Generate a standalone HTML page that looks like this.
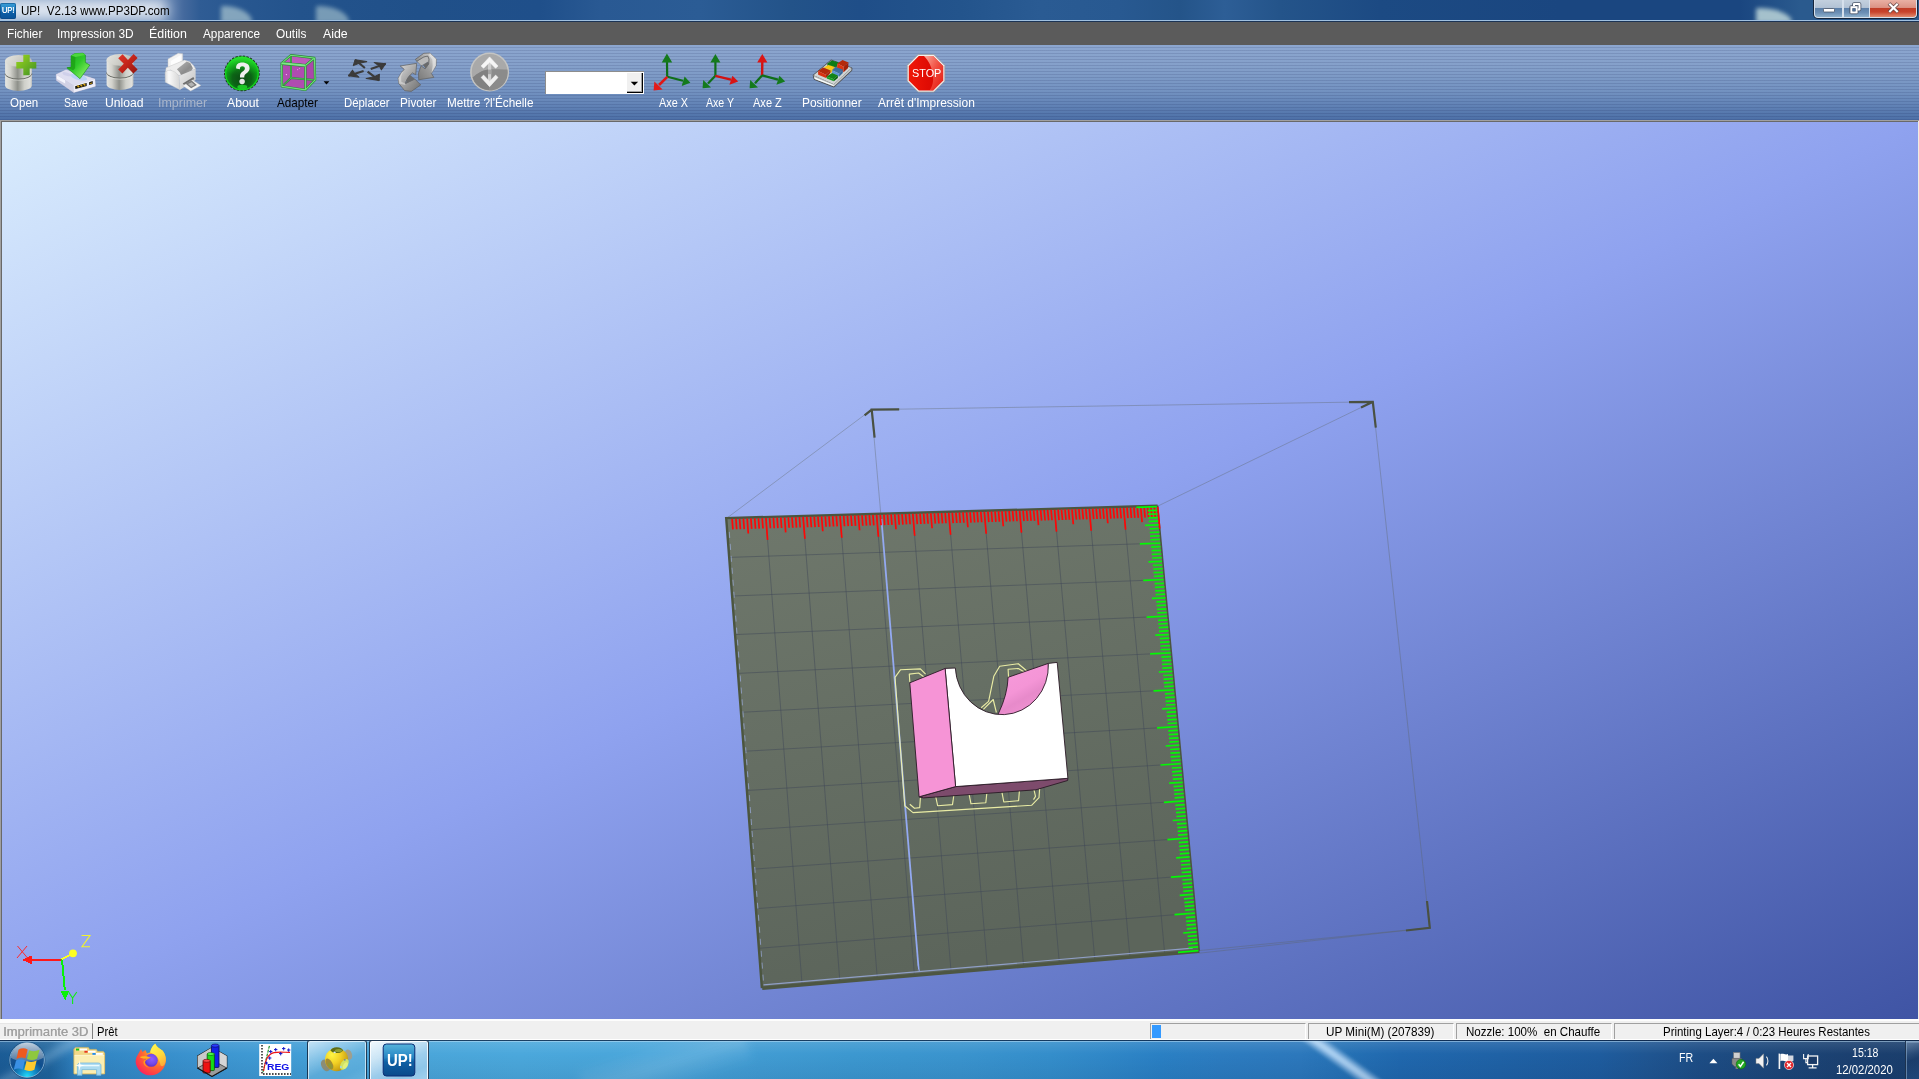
<!DOCTYPE html>
<html><head><meta charset="utf-8"><title>UP!</title>
<style>
html,body{margin:0;padding:0;background:#000;}
body{width:1919px;height:1079px;overflow:hidden;font-family:"Liberation Sans",sans-serif;font-size:12px;}
#root{position:relative;width:1919px;height:1079px;overflow:hidden;background:#f0f0f0;}
.abs{position:absolute;}
.t{position:absolute;white-space:pre;line-height:14px;height:14px;transform-origin:0 0;}
/* title bar */
#title{position:absolute;left:0;top:0;width:1919px;height:22px;overflow:hidden;
 background:linear-gradient(90deg,#86a3c8 0px,#7693bd 160px,#44699d 184px,#2f5c94 200px,#285790 240px,#23538c 300px,#205089 420px,#1f4f8a 540px,#295993 600px,#2b5c95 700px,#235389 790px,#1f4e88 860px,#23548c 960px,#2a5b93 1040px,#285991 1120px,#245489 1180px,#2d5e96 1225px,#24548a 1280px,#1c4a83 1380px,#1a4680 1560px,#1a4680 1740px,#2a5a8e 1800px,#2a598d 1919px);}
#title .glow{position:absolute;left:-10px;top:1px;width:178px;height:17px;border-radius:9px;background:rgba(255,255,255,.86);filter:blur(7px);}
#title .l1{position:absolute;left:0;top:20px;width:1919px;height:1px;background:#9fc0e0;}
#title .l2{position:absolute;left:0;top:21px;width:1919px;height:1px;background:#1b3354;}
/* menubar */
#menu{position:absolute;left:0;top:22px;width:1919px;height:23px;background:#5b5b5b;color:#fff;}
/* toolbar */
#tb{position:absolute;left:0;top:45px;width:1919px;height:75px;
 background:
  repeating-linear-gradient(180deg,rgba(0,0,40,0) 0px,rgba(0,0,40,0) 2px,rgba(0,10,60,.115) 2px,rgba(0,10,60,.115) 3px),
  linear-gradient(180deg,#8ca6cf 0px,#85a0ca 20px,#7493c1 45px,#6283b6 60px,#4d70a7 75px);}
#tb .lb{position:absolute;top:52px;color:#fff;white-space:nowrap;line-height:14px;height:14px;transform-origin:0 0;font-size:12px;}
/* viewport */
#vpb1{position:absolute;left:0;top:120px;width:1919px;height:900px;background:#a0a0a0;}
#vpb2{position:absolute;left:1px;top:121px;width:1917px;height:898px;background:#696969;}
#vp{position:absolute;left:2px;top:122px;width:1916px;height:897px;overflow:hidden;
 background:linear-gradient(to bottom right,#d9ecfd 0%,#8fa2ef 50%,#3f54a4 100%);}
/* status bar */
#sb{position:absolute;left:0;top:1019px;width:1919px;height:21px;background:#f0f0f0;}
/* taskbar */
#task{position:absolute;left:0;top:1040px;width:1919px;height:39px;overflow:hidden;}
.wb{top:0;height:17px;background:linear-gradient(180deg,#c3d0de 0%,#b3c3d5 44%,#5b7fa8 48%,#6c8fb5 75%,#8db0cc 100%);}
.wbc{top:0;height:17px;background:linear-gradient(180deg,#e9b0a3 0%,#dc9384 44%,#c03d26 48%,#c9432c 70%,#e28a6e 100%);}

#title .blob{position:absolute;background:#c6dede;filter:blur(2px);border-radius:2px 100% 0 0;}

</style></head>
<body>
<div id="root">
<div id="title">
<div class="blob" style="left:221px;top:6px;width:31px;height:17px;opacity:.58"></div><div class="blob" style="left:316px;top:6px;width:33px;height:17px;opacity:.52"></div><div class="blob" style="left:1756px;top:8px;width:36px;height:15px;opacity:.8"></div>
<div class="glow"></div>
<div class="abs" style="left:0;top:3px;width:16px;height:16px;border-radius:2px;background:linear-gradient(180deg,#3aa0d8 0%,#1f7cc0 40%,#0d5ea6 60%,#0a5298 100%);box-shadow:inset 0 0 0 1px rgba(10,70,130,.55)"></div>
<span class="t" style="left:2.30px;top:3.4px;font-size:8.6px;color:#fff;font-weight:normal;transform:scaleX(0.8609);text-shadow:0 0 .6px #fff;">UP!</span>
<span class="t" style="left:20.61px;top:4.0px;font-size:13px;color:#000;font-weight:normal;transform:scaleX(0.8918);">UP!  V2.13 www.PP3DP.com</span>
<div class="abs" style="left:1813px;top:-1px;width:105px;height:20px;border-radius:0 0 5px 5px;background:#16263c;"></div>
<div class="abs" style="left:1814px;top:0;width:103px;height:18px;border-radius:0 0 4px 4px;background:rgba(235,245,255,.9);"></div>
<div class="abs wb" style="left:1815px;width:27px;border-radius:0 0 0 3px;"></div>
<div class="abs wb" style="left:1844px;width:25px;"></div>
<div class="abs wbc" style="left:1870px;width:46px;border-radius:0 0 3px 0;"></div>
<svg class="abs" style="left:1812px;top:0" width="107" height="20" viewBox="1812 0 107 20">
 <rect x="1823.5" y="8.5" width="11" height="3.5" rx=".8" fill="#fff" stroke="#4a5568" stroke-width=".8"/>
 <g fill="none" stroke="#4a5568" stroke-width="3.6" stroke-linejoin="round"><rect x="1854" y="4" width="5.5" height="5.5"/><rect x="1851.2" y="7" width="5.5" height="5.5"/></g>
 <g fill="none" stroke="#fff" stroke-width="2" stroke-linejoin="round"><rect x="1854" y="4" width="5.5" height="5.5"/></g>
 <rect x="1850.2" y="6" width="7.5" height="7.5" fill="#4a5568" rx="1"/>
 <g fill="none" stroke="#fff" stroke-width="2" stroke-linejoin="miter"><rect x="1851.4" y="7.2" width="5.2" height="5.2"/></g>
 <rect x="1852.6" y="8.4" width="2.8" height="2.8" fill="#4e6f98"/>
 <g stroke-linecap="butt" fill="none"><path d="M1889,3.5 L1898,12.2 M1898,3.5 L1889,12.2" stroke="#6a4a48" stroke-width="3.8"/><path d="M1889.3,3.8 L1897.7,12 M1897.7,3.8 L1889.3,12" stroke="#fff" stroke-width="2.2"/></g>
</svg>
<div class="l1"></div><div class="l2"></div>
</div>
<div id="menu">
<span class="t" style="left:7.40px;top:4.5px;font-size:13px;color:#fff;font-weight:normal;transform:scaleX(0.9049);">Fichier</span>
<span class="t" style="left:57.49px;top:4.5px;font-size:13px;color:#fff;font-weight:normal;transform:scaleX(0.9148);">Impression 3D</span>
<span class="t" style="left:149.05px;top:4.5px;font-size:13px;color:#fff;font-weight:normal;transform:scaleX(0.9528);">Édition</span>
<span class="t" style="left:203.20px;top:4.5px;font-size:13px;color:#fff;font-weight:normal;transform:scaleX(0.9066);">Apparence</span>
<span class="t" style="left:276.00px;top:4.5px;font-size:13px;color:#fff;font-weight:normal;transform:scaleX(0.9131);">Outils</span>
<span class="t" style="left:322.80px;top:4.5px;font-size:13px;color:#fff;font-weight:normal;transform:scaleX(0.9461);">Aide</span>
</div>
<div id="tb">
<svg class="abs" style="left:0;top:0" width="1000" height="75" viewBox="0 45 1000 75"><defs>
<linearGradient id="cyl" x1="0" x2="1" y1="0" y2="0"><stop offset="0" stop-color="#e6e6e2"/><stop offset=".2" stop-color="#d2d2cc"/><stop offset=".47" stop-color="#8e908a"/><stop offset=".72" stop-color="#cfd0ca"/><stop offset=".93" stop-color="#dfdfdb"/><stop offset="1" stop-color="#c4c4c0"/></linearGradient>
<linearGradient id="cylt" x1="0" x2="1" y1="0" y2="0.3"><stop offset="0" stop-color="#e6e6e2"/><stop offset=".5" stop-color="#d2d2cc"/><stop offset="1" stop-color="#bcbcb6"/></linearGradient>
<linearGradient id="plus" x1="0" x2="1" y1="0" y2="1"><stop offset="0" stop-color="#9ad51c"/><stop offset=".5" stop-color="#6fb422"/><stop offset="1" stop-color="#3f8f24"/></linearGradient>
<linearGradient id="redx" x1="0" x2="1" y1="0" y2="1"><stop offset="0" stop-color="#e2362a"/><stop offset=".5" stop-color="#c2241a"/><stop offset="1" stop-color="#8e1510"/></linearGradient>
<linearGradient id="garr" x1="0" x2="1" y1="0" y2="1"><stop offset="0" stop-color="#1ea81c"/><stop offset=".45" stop-color="#2fc82a"/><stop offset=".8" stop-color="#7bea58"/><stop offset="1" stop-color="#42c834"/></linearGradient>
<radialGradient id="abt" cx=".5" cy=".64" r=".62" fx=".5" fy=".66"><stop offset="0" stop-color="#0c4c14"/><stop offset=".45" stop-color="#0c6416"/><stop offset=".72" stop-color="#0e9a18"/><stop offset=".9" stop-color="#10c41a"/><stop offset="1" stop-color="#14d81e"/></radialGradient>
<linearGradient id="abth" x1="0" x2="0" y1="0" y2="1"><stop offset="0" stop-color="#3ff03f" stop-opacity=".55"/><stop offset="1" stop-color="#10c018" stop-opacity=".0"/></linearGradient>
<linearGradient id="gry" x1="0" x2="1" y1="0" y2="1"><stop offset="0" stop-color="#dcdcdc"/><stop offset=".5" stop-color="#a2a2a2"/><stop offset="1" stop-color="#6e6e6e"/></linearGradient>
<linearGradient id="gry2" x1="1" x2="0" y1="0" y2="1"><stop offset="0" stop-color="#e2e2e2"/><stop offset=".5" stop-color="#9a9a9a"/><stop offset="1" stop-color="#747474"/></linearGradient>
<linearGradient id="stopg" x1="0" x2="1" y1="0" y2="0"><stop offset="0" stop-color="#f01808"/><stop offset=".55" stop-color="#e00c04"/><stop offset="1" stop-color="#d40a04"/></linearGradient>
<linearGradient id="stoph" x1="0" x2="1" y1="0" y2="1"><stop offset="0" stop-color="#ffc4b6" stop-opacity=".9"/><stop offset=".5" stop-color="#ff7866" stop-opacity=".6"/><stop offset="1" stop-color="#ff4030" stop-opacity=".35"/></linearGradient>
</defs>
<!-- OPEN: database cylinder + green plus -->
<g id="ic-open">
 <path d="M5.1,74 L5.1,85.2 A13.4,5.7 0 0 0 31.9,85.2 L31.9,74 Z" fill="url(#cyl)"/>
 <path d="M5.1,73.6 A13.4,5.4 0 0 0 31.9,73.6" fill="none" stroke="#5e605a" stroke-width="1.1" opacity=".85"/><path d="M5.1,74.8 A13.4,5.4 0 0 0 31.9,74.8" fill="none" stroke="#f0f0ec" stroke-width=".7" opacity=".7"/>
 <path d="M5.1,60.8 L5.1,72.8 A13.4,5.4 0 0 0 31.9,72.8 L31.9,60.8 Z" fill="url(#cyl)"/>
 <ellipse cx="18.5" cy="60.8" rx="13.4" ry="5.9" fill="url(#cylt)"/>
 <path d="M23.3,54.8 h6.4 v7.1 h6.6 v6.7 h-6.6 v6.7 h-6.4 v-6.7 h-7 v-6.7 h7 Z" fill="url(#plus)"/>
</g>
<!-- SAVE: hdd + green arrow -->
<g id="ic-save">
 <path d="M56.0,74.5 L66.0,69.8 L94.9,79.1 L95.4,86.3 L73.8,92.5 L56.5,80.5 Z" fill="#c6c6dc" stroke="#b0b0c8" stroke-width=".5" stroke-linejoin="round"/>
 <path d="M56.0,74.5 L66.0,69.8 L94.9,79.1 L73.6,85.4 Z" fill="#dedef0" />
 <path d="M56.0,74.5 L73.6,85.4 L73.8,92.5 L56.5,80.5 Z" fill="#d0d0e4" />
 <path d="M56.7,75.1 L65.1,80.2 L65.2,83.6 L56.9,79.1 Z" fill="#f4f4fc" />
 <path d="M73.6,85.4 L94.9,79.1 L95.4,86.3 L73.8,92.5 Z" fill="#ececf7" />
 <ellipse cx="78.9" cy="77.1" rx="8.4" ry="3" fill="#b9d2f6" transform="rotate(14 78.9 77.1)"/>
 <ellipse cx="66.9" cy="74.2" rx="4.6" ry="1.6" fill="#cfd0ea" transform="rotate(16 66.9 74.2)"/>
 <path d="M75.1,86.3 L86.7,83.1 L86.7,85.9 L75.4,89.0 Z" fill="#18160c" />
 <path d="M76.7,85.7 L78.4,85.3 L79.8,87.0 L78.1,87.4 Z" fill="#d8a414" />
 <path d="M79.8,84.9 L81.5,84.4 L82.9,86.2 L81.2,86.6 Z" fill="#d8a414" />
 <path d="M82.9,84.1 L84.6,83.6 L86.0,85.3 L84.3,85.8 Z" fill="#d8a414" />
 <path d="M89.1,82.2 L92.7,81.1 L92.7,84.1 L89.1,85.0 Z" fill="#18160c" />
 <path d="M89.8,83.2 L92.0,82.6 L92.0,83.5 L89.8,84.1 Z" fill="#d8a414" />
 <path d="M71.1,55.8 L74.9,53.6 L83.1,53.2 L85.4,55.1 L85.4,62.5 L89.8,65.1 L80.0,78.7 L66.9,67.8 L71.1,67.1 Z" fill="url(#garr)" stroke="#129012" stroke-width=".6" stroke-linejoin="round"/>
 <path d="M71.1,55.8 L74.9,53.6 L83.1,53.2 L85.4,55.1 L75.4,56.9 Z" fill="#4cd83c" />
 <path d="M71.1,55.8 L75.4,56.9 L75.1,68.2 L73.1,70.2 L66.9,67.8 L71.1,67.1 Z" fill="#1da014" opacity=".8"/>
</g>
<!-- UNLOAD: cylinder + red X -->
<g id="ic-unload" transform="translate(101.5,-1)">
 <path d="M5.1,74 L5.1,85.2 A13.4,5.7 0 0 0 31.9,85.2 L31.9,74 Z" fill="url(#cyl)"/>
 <path d="M5.1,73.6 A13.4,5.4 0 0 0 31.9,73.6" fill="none" stroke="#5e605a" stroke-width="1.1" opacity=".85"/><path d="M5.1,74.8 A13.4,5.4 0 0 0 31.9,74.8" fill="none" stroke="#f0f0ec" stroke-width=".7" opacity=".7"/>
 <path d="M5.1,60.8 L5.1,72.8 A13.4,5.4 0 0 0 31.9,72.8 L31.9,60.8 Z" fill="url(#cyl)"/>
 <ellipse cx="18.5" cy="60.8" rx="13.4" ry="5.9" fill="url(#cylt)"/>
</g>
<path d="M118.2,58.2 L122.6,54.3 L128,60 L133.6,54.1 L137.6,58 L132,63.8 L137.6,69.6 L133.4,73.6 L127.8,67.8 L122.4,73.4 L118.2,69.4 L123.8,63.8 Z" fill="url(#redx)"/>
<!-- IMPRIMER: greyed printer -->
<defs>
<linearGradient id="prl" x1="0" x2="1" y1="0" y2="0"><stop offset="0" stop-color="#dcdcdc"/><stop offset=".25" stop-color="#fafafa"/><stop offset="1" stop-color="#d4d4d4"/></linearGradient>
<linearGradient id="prr" x1="0" x2="1" y1="0" y2="1"><stop offset="0" stop-color="#ececec"/><stop offset="1" stop-color="#c2c2c2"/></linearGradient>
<linearGradient id="prk" x1="0" x2="1" y1="0" y2="1"><stop offset="0" stop-color="#b8b8b8"/><stop offset=".6" stop-color="#8c8c8c"/><stop offset="1" stop-color="#a8a8a8"/></linearGradient>
</defs>
<g id="ic-print">
 <path d="M168.0,59.1 L178.2,53.3 L182.7,53.8 L182.7,61.8 L170.7,68.9 L168.0,67.6 Z" fill="#f3f3f3" stroke="#c4c4c4" stroke-width=".5"/>
 <path d="M170.9,60.9 L180.9,55.1 L180.9,61.3 L170.9,67.6 Z" fill="#fdfdfd"/>
 <path d="M166.0,67.8 L184.5,60.1 L189.8,61.8 L193.8,65.8 L195.6,69.1 L179.1,75.8 L170.7,70.2 L165.6,72.0 Z" fill="#ededed" stroke="#bcbcbc" stroke-width=".4"/>
 <path d="M176.9,69.3 L186.7,61.6 L190.2,62.9 L192.9,68.2 L191.8,70.5 L183.4,75.6 L180.9,74.7 L179.6,72.2 Z" fill="url(#prk)"/>
 <path d="M165.1,72.2 L167.6,70.5 L170.7,70.2 L175.1,72.0 L179.1,75.8 L180.0,89.8 L165.3,82.2 Z" fill="url(#prl)" stroke="#c8c8c8" stroke-width=".4"/>
 <path d="M179.1,75.8 L195.6,69.1 L195.6,80.0 L180.0,89.8 Z" fill="url(#prr)"/>
 <path d="M182.7,83.6 L193.4,76.9 L194.3,79.1 L184.5,85.4 Z" fill="#6e6e6e"/>
 <path d="M182.7,85.8 L192.5,80.0 L200.9,85.4 L190.7,91.1 Z" fill="#f4f4f4" stroke="#bdbdbd" stroke-width=".4"/>
 <path d="M185.4,83.6 L191.6,80.5 L196.9,84.9 L191.1,88.3 Z" fill="#7a7a7a"/>
 <path d="M188.0,84.0 L191.6,82.2 L194.7,84.9 L191.1,86.7 Z" fill="#b4b4b4"/>
</g>
<!-- ABOUT -->
<g id="ic-about">
 <circle cx="241.9" cy="73.4" r="17.2" fill="url(#abt)" stroke="#223a22" stroke-width="1.4" stroke-dasharray="2.4 1.3"/>
 <circle cx="241.9" cy="73.4" r="16.3" fill="none" stroke="#14d420" stroke-width="1.3"/>
 <path d="M226,70 A16.4,16.4 0 0 1 258.2,70 C252,77 232,77 226,70 Z" fill="url(#abth)"/>
 <ellipse cx="242.3" cy="87" rx="5" ry="2.2" fill="#22e02a" opacity=".8"/>
 <path d="M236.2,68.6 C235.6,64.6 238.4,62.6 242.2,62.6 C246.6,62.6 249.6,64.8 249.6,68.2 C249.6,71.4 247.2,72.6 245.6,73.9 C244.4,74.9 244.3,75.8 244.3,77.4 L240,77.4 C239.8,74.8 240.4,73.4 242,72 C243.4,70.8 244.9,70 244.9,68.4 C244.9,67 243.8,66.2 242.3,66.2 C240.6,66.2 239.8,67.3 239.9,69.2 Z" fill="#efefef"/>
 <circle cx="242.1" cy="81.5" r="2.7" fill="#e4e4e4"/>
</g>
<!-- ADAPTER cube -->
<g id="ic-adapt">
 <path d="M281.6,63.3 L291.0,55.2 L314.4,58.0 L315.1,79.9 L305.4,89.9 L281.9,86.4 Z" fill="#b04cb0"/>
 <path d="M281.6,63.3 L291.0,55.2 L314.4,58.0 L305.4,65.5 Z" fill="#bd5abd"/>
 <path d="M305.4,65.5 L314.4,58.0 L315.1,79.9 L305.4,89.9 Z" fill="#ab47ab"/>
 <g fill="none" stroke="#2f8a38" stroke-width="2" stroke-linejoin="round"><path d="M291.0,55.2 L291.0,78.0 L281.9,86.4 M291.0,78.0 L315.1,79.9"/></g>
 <g fill="none" stroke="#52c05c" stroke-width=".9" stroke-linejoin="round"><path d="M291.0,55.2 L291.0,78.0 L281.9,86.4 M291.0,78.0 L315.1,79.9"/></g>
 <g fill="none" stroke="#2a8a34" stroke-width="2.3" stroke-linejoin="round"><path d="M281.6,63.3 L291.0,55.2 L314.4,58.0 L305.4,65.5 Z M281.6,63.3 L281.9,86.4 L305.4,89.9 L305.4,65.5 M305.4,89.9 L315.1,79.9 L314.4,58.0"/></g>
 <g fill="none" stroke="#6fe078" stroke-width="1.1" stroke-linejoin="round"><path d="M281.6,63.3 L291.0,55.2 L314.4,58.0 L305.4,65.5 Z M281.6,63.3 L281.9,86.4 L305.4,89.9 L305.4,65.5 M305.4,89.9 L315.1,79.9 L314.4,58.0"/></g>
 <path d="M281.6,63.3 L305.4,65.5" stroke="#2a8a34" stroke-width="3.2" fill="none"/><path d="M281.6,63.3 L305.4,65.5" stroke="#7fe888" stroke-width="1.9" fill="none"/>
 <circle cx="286.4" cy="74.6" r=".7" fill="#f4c8f4"/><circle cx="297.6" cy="69.6" r=".6" fill="#f090f0"/><circle cx="299.4" cy="68.4" r=".5" fill="#e8a8e8"/>
</g>
<path d="M323.6,81.2 L329.4,81.2 L326.5,84.4 Z" fill="#000"/>
<!-- DEPLACER arrows -->
<g id="ic-move" stroke="#3b3b3b" stroke-linejoin="round" stroke-linecap="butt">
 <path d="M364.9,68.0 L355.1,59.8 M370.7,68.9 L385.6,63.7 M363.6,70.9 L348.5,75.7 M367.6,71.6 L379.1,80.4" fill="none" stroke-width="2.1"/>
 <path d="M355.1,59.8 L366.7,61.6 L359.2,63.2 L353.3,65.6 Z M385.6,63.7 L374.2,62.6 L379.3,65.9 L381.4,69.8 Z M348.5,75.7 L352.5,70.2 L354.8,73.7 L358.9,77.1 Z M379.1,80.4 L366.2,78.5 L374.3,76.7 L379.4,74.2 Z" fill="#3b3b3b" stroke-width="1.1"/>
</g>
<!-- PIVOTER -->
<g id="ic-rot">
 <path d="M400.2,66.0 L416.7,63.3 L415.7,74.7 L412.5,72.9 L408.7,76.5 L405.8,81.8 L405.3,83.6 L414.9,79.1 L420.7,84.9 L411.3,91.4 L404.7,90.7 L398.9,83.6 L398.2,78.2 L401.3,72.7 L404.2,69.3 Z" fill="url(#gry)" stroke="#5e5e5e" stroke-width=".7" stroke-linejoin="round"/>
 <path d="M398.9,83.6 L398.2,78.2 L401.3,72.7 L403.3,71.1 L401.1,76.5 L401.3,81.8 L405.3,83.6 L405.3,84.9 Z" fill="#e4e4e4" opacity=".55"/>
 <path d="M410.0,75.1 L414.9,79.1 L406.0,83.4 L406.8,79.1 Z" fill="#6a6a6a"/>
 <path d="M416.7,61.3 L423.8,56.9 L427.8,56.0 L429.1,59.1 L428.7,64.0 L427.8,62.0 L422.9,65.1 L421.1,65.8 L418.5,62.7 Z" fill="#b9b9b9" stroke="#6a6a6a" stroke-width=".5"/>
 <path d="M415.4,59.3 L423.8,53.3 L430.0,53.1 L436.3,59.1 L436.0,65.8 L431.4,73.4 L433.8,77.4 L418.7,79.8 L418.5,72.9 L421.1,65.8 L425.1,68.9 L428.7,64.0 L429.1,59.1 L427.8,56.0 L423.8,56.9 L416.7,61.3 Z" fill="url(#gry2)" stroke="#5e5e5e" stroke-width=".7" stroke-linejoin="round"/>
 <path d="M430.0,53.1 L436.3,59.1 L436.0,65.8 L431.4,73.4 L432.7,65.8 L432.3,59.6 L429.1,55.6 Z" fill="#ececec" opacity=".6"/>
 <path d="M422.9,65.1 L427.8,62.0 L428.7,64.2 L425.6,68.5 Z" fill="#6a6a6a"/>
</g>
<!-- SCALE -->
<g id="ic-scale">
 <circle cx="489.6" cy="72" r="18.7" fill="#a9a9a9" stroke="#c4c4c2" stroke-width="1.6"/>
 <path d="M472.6,77.6 C478,72.5 484,69.6 489,69.4 C496,69.2 502,69.6 507.4,69.4 A17.9,17.9 0 0 1 472.6,77.6 Z" fill="#8b8b8b"/>
 <path d="M472.6,77.6 C478,72.5 484,69.6 489,69.4 L489,89.9 A17.9,17.9 0 0 1 472.6,77.6 Z" fill="#818181"/>
 <rect x="488" y="62.6" width="3.2" height="19.6" fill="#cfcfcf"/>
 <rect x="488" y="69.6" width="3.2" height="4.6" fill="#a4a4a4"/>
 <path d="M489.6,56.9 L498,66 L495.6,68.2 L489.6,62.2 L483.6,68.2 L481.1,66 Z" fill="#f6f6f6" stroke="#f6f6f6" stroke-width=".6" stroke-linejoin="round"/>
 <path d="M489.6,86.7 L498,77.4 L495.6,75.1 L489.6,81.4 L483.6,75.1 L481.1,77.4 Z" fill="#f0f0f0" stroke="#f0f0f0" stroke-width=".6" stroke-linejoin="round"/>
</g>
<!-- AXES icons -->
<g id="ic-axes" stroke-linecap="butt">
 <!-- Axe X : origin (667.3,76.8) -->
 <g>
  <path d="M667.2,76.8 L667,62" stroke="#0f6f18" stroke-width="2.2" fill="none"/>
  <path d="M666.9,53.6 L672.2,62.4 L661.8,62.6 Z" fill="#147a1c"/>
  <path d="M667.3,76.8 L683,80.8" stroke="#0f6f18" stroke-width="2.2" fill="none"/>
  <path d="M690.4,82.8 L681.6,86 L684.6,76.6 Z" fill="#147a1c"/>
  <path d="M667.3,76.8 L659,85" stroke="#e01616" stroke-width="2.6" fill="none"/>
  <path d="M653.6,90.4 L654.4,81.6 L662.6,89.6 Z" fill="#e21a1a"/>
 </g>
 <!-- Axe Y : origin (715.4,75.7) -->
 <g>
  <path d="M715.4,75.8 L715.4,62" stroke="#0f6f18" stroke-width="2.2" fill="none"/>
  <path d="M715.4,53.9 L720.4,62.6 L710.4,62.6 Z" fill="#147a1c"/>
  <path d="M715.4,75.8 L708,83.4" stroke="#0f6f18" stroke-width="2.2" fill="none"/>
  <path d="M702.6,88.2 L703.2,80 L711,87.4 Z" fill="#147a1c"/>
  <path d="M715.4,75.8 L731,79.6" stroke="#d21212" stroke-width="2.4" fill="none"/>
  <path d="M738.2,81.6 L729.4,84.8 L732.4,75.8 Z" fill="#d81414"/>
 </g>
 <!-- Axe Z : origin (761.9,75.3) -->
 <g>
  <path d="M762.1,75.4 L762.3,62" stroke="#d21212" stroke-width="2.4" fill="none"/>
  <path d="M762.3,53.9 L767.4,62.6 L757.2,62.6 Z" fill="#dc1616"/>
  <path d="M762,75.4 L755,83.2" stroke="#0f6f18" stroke-width="2.2" fill="none"/>
  <path d="M749.6,88.2 L750.2,80 L758,87.4 Z" fill="#147a1c"/>
  <path d="M762,75.4 L778,79.6" stroke="#0f6f18" stroke-width="2.2" fill="none"/>
  <path d="M785.2,81.6 L776.4,84.8 L779.4,75.8 Z" fill="#147a1c"/>
 </g>
</g>
<!-- POSITIONNER -->
<g id="ic-pos">
 <path d="M813.1,75.2 L831.1,59.9 L851.9,67.9 L851.9,70.5 L834.0,87.1 L814.2,79.4 Z" fill="#4e4e4e" stroke="#4e4e4e" stroke-width=".8" stroke-linejoin="round"/>
 <path d="M813.6,75.2 L831.2,60.5 L851.4,68.1 L833.8,84.2 Z" fill="#d2d6d6" />
 <path d="M813.6,75.2 L833.8,84.2 L851.4,68.1 L851.4,70.2 L833.9,86.5 L814.6,79.1 Z" fill="#b4b8b8" />
 <path d="M814.1,76.9 L833.8,84.9 L833.9,86.3 L814.7,79.1 Z" fill="#fafefe" />
 <path d="M833.8,84.9 L851.1,68.9 L851.2,70.1 L833.9,86.3 Z" fill="#c9cdcd" />
 <path d="M827.1,63.7 L831.8,60.4 L838.3,62.3 L837.0,66.2 L828.5,65.7 Z" fill="#0e7c16" />
 <path d="M827.1,63.7 L828.5,65.7 L837.0,66.2 L836.9,67.6 L827.6,66.7 Z" fill="#0a6010" />
 <path d="M837.4,63.6 L842.5,60.1 L848.5,62.5 L843.6,66.7 Z" fill="#b42a0c" />
 <path d="M837.4,63.6 L843.6,66.7 L843.6,72.2 L837.0,67.8 Z" fill="#de3410" />
 <path d="M843.6,66.7 L848.5,62.5 L848.1,68.1 L843.6,72.2 Z" fill="#a2220a" />
 <path d="M824.0,67.6 L828.1,65.1 L834.3,66.8 L831.1,70.2 Z" fill="#fcc812" />
 <path d="M824.0,67.6 L831.1,70.2 L831.2,73.1 L824.2,69.7 Z" fill="#d6a00a" />
 <path d="M831.1,70.2 L834.3,66.8 L834.3,68.9 L831.2,73.1 Z" fill="#e8b40e" />
 <path d="M832.0,70.2 L835.6,67.1 L842.8,69.4 L839.1,73.4 Z" fill="#3d6e9e" />
 <path d="M832.0,70.2 L839.1,73.4 L839.1,76.7 L832.1,73.0 Z" fill="#5c96d2" />
 <path d="M839.1,73.4 L842.8,69.4 L842.8,73.0 L839.1,76.7 Z" fill="#3a6a9c" />
 <path d="M818.0,70.9 L823.1,67.6 L830.3,70.5 L825.8,74.7 Z" fill="#b22a0c" />
 <path d="M818.0,70.9 L825.8,74.7 L826.1,77.9 L818.2,74.8 Z" fill="#d83210" />
 <path d="M825.8,74.7 L830.3,70.5 L830.3,73.0 L826.1,77.9 Z" fill="#a8240a" />
 <path d="M826.7,76.5 L832.1,72.9 L837.9,75.6 L833.8,79.2 Z" fill="#0f8418" />
 <path d="M826.7,76.5 L833.8,79.2 L833.8,81.3 L826.8,78.4 Z" fill="#14a020" />
 <path d="M833.8,79.2 L837.9,75.6 L837.9,77.9 L833.8,81.3 Z" fill="#0a6412" />
</g>
<!-- STOP -->
<g id="ic-stop">
 <path d="M918.2,54.4 L933.8,54.4 L944.8,65.4 L944.8,81 L933.8,92 L918.2,92 L907.2,81 L907.2,65.4 Z" fill="#f2f2f2" stroke="#9a9a9a" stroke-width=".8"/>
 <path d="M918.8,56 L933.2,56 L943.2,66 L943.2,80.4 L933.2,90.4 L918.8,90.4 L908.8,80.4 L908.8,66 Z" fill="url(#stopg)"/>
 <path d="M924,56 L933.2,56 L943.2,66 L943.2,80.4 L933.2,90.4 L929.5,90.4 C936,83 934,66 924,56 Z" fill="url(#stoph)"/>
</g>
</svg>
<span class="t" style="left:10.00px;top:51.0px;font-size:13px;color:#fff;font-weight:normal;transform:scaleX(0.8869);">Open</span>
<span class="t" style="left:64.30px;top:51.0px;font-size:13px;color:#fff;font-weight:normal;transform:scaleX(0.8061);">Save</span>
<span class="t" style="left:104.66px;top:51.0px;font-size:13px;color:#fff;font-weight:normal;transform:scaleX(0.9358);">Unload</span>
<span class="t" style="left:158.04px;top:51.0px;font-size:13px;color:#a9b5ca;font-weight:normal;transform:scaleX(0.9598);">Imprimer</span>
<span class="t" style="left:226.70px;top:51.0px;font-size:13px;color:#fff;font-weight:normal;transform:scaleX(0.9400);">About</span>
<span class="t" style="left:277.20px;top:51.0px;font-size:13px;color:#000;font-weight:normal;transform:scaleX(0.9004);">Adapter</span>
<span class="t" style="left:343.63px;top:51.0px;font-size:13px;color:#fff;font-weight:normal;transform:scaleX(0.8743);">Déplacer</span>
<span class="t" style="left:399.70px;top:51.0px;font-size:13px;color:#fff;font-weight:normal;transform:scaleX(0.9020);">Pivoter</span>
<span class="t" style="left:446.80px;top:51.0px;font-size:13px;color:#fff;font-weight:normal;transform:scaleX(0.9041);">Mettre ?l'Échelle</span>
<span class="t" style="left:659.10px;top:51.0px;font-size:13px;color:#fff;font-weight:normal;transform:scaleX(0.8368);">Axe X</span>
<span class="t" style="left:706.40px;top:51.0px;font-size:13px;color:#fff;font-weight:normal;transform:scaleX(0.8140);">Axe Y</span>
<span class="t" style="left:753.30px;top:51.0px;font-size:13px;color:#fff;font-weight:normal;transform:scaleX(0.8497);">Axe Z</span>
<span class="t" style="left:801.58px;top:51.0px;font-size:13px;color:#fff;font-weight:normal;transform:scaleX(0.9180);">Positionner</span>
<span class="t" style="left:878.40px;top:51.0px;font-size:13px;color:#fff;font-weight:normal;transform:scaleX(0.9214);">Arrêt d'Impression</span>
<span class="t" style="left:911.80px;top:21.1px;font-size:11.8px;color:#fff;font-weight:normal;transform:scaleX(0.9177);">STOP</span>
<div class="abs" style="left:545px;top:26px;width:99px;height:23px;background:#fff;box-shadow:inset 1px 1px 0 #8d8d8d, inset 2px 2px 0 #fff"></div>
<div class="abs" style="left:626px;top:27px;width:17px;height:21px;background:#f0f0f0;box-shadow:inset 1px 1px 0 #fff, inset -1px -1px 0 #000, inset -2px -2px 0 #a0a0a0"></div>
<svg class="abs" style="left:630px;top:36px" width="9" height="6" viewBox="0 0 9 6"><path d="M0.7,0.8 L8.1,0.8 L4.4,4.6 Z" fill="#000"/></svg>
</div>
<div id="vpb1"></div><div id="vpb2"></div>
<div id="vp"><svg width="1916" height="897" viewBox="2 122 1916 897" style="position:absolute;left:0;top:0">
<defs><linearGradient id="pg" x1="0" y1="0" x2="0.25" y2="1"><stop offset="0" stop-color="#6f786c"/><stop offset="1" stop-color="#5c655b"/></linearGradient></defs>
<path d="M727.0,518.0 L871.6,409.6 M1158.0,506.0 L1372.8,401.8 M871.6,409.6 L1372.8,401.8 M1372.8,401.8 L1429.6,927.8 M871.6,409.6 L881.2,518.7" stroke="#5c6460" stroke-opacity="0.36" stroke-width="1" fill="none"/>
<path d="M1199.2,950.6 L1429.6,927.8 M1199.2,953.2 L1429.6,927.8" stroke="#5c6460" stroke-opacity="0.36" stroke-width="1" fill="none"/>
<polygon points="726.2,518.1 1157.6,505.8 1199.2,950.6 761.9,988.1" fill="url(#pg)"/>
<path d="M765.8,517.0 L802.1,984.7 M729.2,557.4 L1161.1,543.1 M803.0,515.9 L839.9,981.4 M732.1,596.0 L1164.5,579.6 M839.9,514.9 L877.3,978.2 M735.1,634.6 L1167.9,616.2 M876.5,513.8 L914.4,975.0 M738.0,673.4 L1171.4,652.9 M912.7,512.8 L951.1,971.9 M741.0,712.3 L1174.8,689.7 M948.7,511.8 L987.5,968.8 M743.9,751.3 L1178.3,726.7 M984.2,510.7 L1023.6,965.7 M746.9,790.5 L1181.7,763.7 M1019.5,509.7 L1059.3,962.6 M749.9,829.8 L1185.2,800.9 M1054.5,508.7 L1094.8,959.6 M752.9,869.2 L1188.7,838.1 M1089.2,507.8 L1129.9,956.5 M755.9,908.7 L1192.2,875.5 M1123.5,506.8 L1164.7,953.6 M758.9,948.3 L1195.7,913.0" stroke="#3f4858" stroke-opacity="0.5" stroke-width="1" fill="none"/>
<path d="M729.2,531.9 L763.7,985.5" stroke="#a3b6f0" fill="none" stroke-width="1.1" stroke-dasharray="6 6" stroke-opacity=".6"/>
<path d="M763.5,984.8 L1192.7,948.2" stroke="#a3b6f0" fill="none" stroke-width="1.2" stroke-opacity=".72"/>
<path d="M881.4,519.0 L918.8,971.0" stroke="#93a9f1" fill="none" stroke-width="1.8"/>
<path d="M913.2,955.0 L918.3,971.0" stroke="#5a6460" stroke-width="1" fill="none"/>
<path d="M761.9,988.1 L726.2,518.1 L1157.6,505.8" stroke="#4b553f" stroke-width="2.4" fill="none" stroke-linejoin="miter"/>
<path d="M1157.6,505.8 L1199.2,950.6" stroke="#4b553f" stroke-width="1.6" fill="none"/>
<path d="M762.2,988.3 L1199.4,951.2" stroke="#4d5643" stroke-width="3.4" fill="none"/>
<path d="M732.1,518.9 L732.9,529.4 M735.9,518.8 L736.7,529.3 M739.6,518.7 L740.4,529.2 M743.4,518.6 L744.2,529.1 M747.2,518.5 L748.3,533.5 M750.9,518.4 L751.7,528.9 M754.7,518.3 L755.5,528.8 M758.4,518.2 L759.2,528.6 M762.2,518.1 L763.0,528.5 M765.9,518.0 L767.6,539.9 M769.6,517.9 L770.4,528.3 M773.4,517.8 L774.2,528.2 M777.1,517.6 L777.9,528.1 M780.8,517.5 L781.6,528.0 M784.6,517.4 L785.7,532.4 M788.3,517.3 L789.1,527.8 M792.0,517.2 L792.8,527.7 M795.7,517.1 L796.5,527.6 M799.4,517.0 L800.2,527.5 M803.1,516.9 L804.9,538.8 M806.8,516.8 L807.7,527.3 M810.5,516.7 L811.4,527.2 M814.2,516.6 L815.1,527.1 M817.9,516.5 L818.8,527.0 M821.6,516.4 L822.8,531.3 M825.3,516.3 L826.1,526.7 M829.0,516.2 L829.8,526.6 M832.7,516.1 L833.5,526.5 M836.3,516.0 L837.2,526.4 M840.0,515.9 L841.8,537.8 M843.7,515.7 L844.5,526.2 M847.4,515.6 L848.2,526.1 M851.0,515.5 L851.9,526.0 M854.7,515.4 L855.5,525.9 M858.3,515.3 L859.6,530.3 M862.0,515.2 L862.8,525.7 M865.6,515.1 L866.5,525.6 M869.3,515.0 L870.2,525.5 M872.9,514.9 L873.8,525.4 M876.6,514.8 L878.4,536.7 M880.2,514.7 L881.1,525.2 M883.9,514.6 L884.7,525.1 M887.5,514.5 L888.4,525.0 M891.1,514.4 L892.0,524.9 M894.7,514.3 L896.0,529.2 M898.4,514.2 L899.2,524.7 M902.0,514.1 L902.9,524.6 M905.6,514.0 L906.5,524.4 M909.2,513.9 L910.1,524.3 M912.8,513.8 L914.7,535.7 M916.4,513.7 L917.3,524.1 M920.0,513.6 L920.9,524.0 M923.6,513.5 L924.5,523.9 M927.2,513.4 L928.1,523.8 M930.8,513.3 L932.1,528.2 M934.4,513.2 L935.3,523.6 M938.0,513.1 L938.9,523.5 M941.6,513.0 L942.5,523.4 M945.2,512.9 L946.0,523.3 M948.7,512.8 L950.6,534.7 M952.3,512.7 L953.2,523.1 M955.9,512.6 L956.8,523.0 M959.4,512.4 L960.3,522.9 M963.0,512.3 L963.9,522.8 M966.6,512.2 L967.9,527.2 M970.1,512.1 L971.0,522.6 M973.7,512.0 L974.6,522.5 M977.2,511.9 L978.1,522.4 M980.8,511.8 L981.7,522.3 M984.3,511.7 L986.2,533.7 M987.9,511.6 L988.8,522.1 M991.4,511.5 L992.3,522.0 M995.0,511.4 L995.9,521.9 M998.5,511.3 L999.4,521.8 M1002.0,511.2 L1003.3,526.2 M1005.5,511.1 L1006.5,521.6 M1009.1,511.0 L1010.0,521.5 M1012.6,510.9 L1013.5,521.4 M1016.1,510.8 L1017.0,521.3 M1019.6,510.7 L1021.5,532.6 M1023.1,510.6 L1024.0,521.1 M1026.6,510.5 L1027.6,521.0 M1030.1,510.4 L1031.1,520.9 M1033.6,510.3 L1034.6,520.8 M1037.1,510.2 L1038.5,525.2 M1040.6,510.1 L1041.6,520.6 M1044.1,510.0 L1045.1,520.5 M1047.6,509.9 L1048.6,520.4 M1051.1,509.8 L1052.0,520.3 M1054.6,509.7 L1056.5,531.6 M1058.1,509.6 L1059.0,520.1 M1061.5,509.5 L1062.5,520.0 M1065.0,509.4 L1066.0,519.9 M1068.5,509.3 L1069.4,519.8 M1072.0,509.2 L1073.3,524.2 M1075.4,509.1 L1076.4,519.6 M1078.9,509.0 L1079.8,519.5 M1082.3,508.9 L1083.3,519.4 M1085.8,508.8 L1086.8,519.3 M1089.3,508.7 L1091.2,530.7 M1092.7,508.6 L1093.7,519.1 M1096.2,508.6 L1097.1,519.0 M1099.6,508.5 L1100.6,518.9 M1103.0,508.4 L1104.0,518.8 M1106.5,508.3 L1107.8,523.2 M1109.9,508.2 L1110.9,518.6 M1113.3,508.1 L1114.3,518.5 M1116.8,508.0 L1117.7,518.4 M1120.2,507.9 L1121.2,518.3 M1123.6,507.8 L1125.6,529.7 M1127.0,507.7 L1128.0,518.1 M1130.5,507.6 L1131.4,518.0 M1133.9,507.5 L1134.8,517.9 M1137.3,507.4 L1138.3,517.8 M1140.7,507.3 L1142.1,522.2 M1144.1,507.2 L1145.1,517.6 M1147.5,507.1 L1148.5,517.5 M1150.9,507.0 L1151.9,517.4 M1154.3,506.9 L1155.3,517.3 M1157.7,506.8 L1159.7,528.7" stroke="#ff0606" stroke-width="1.7" fill="none"/>
<path d="M1156.9,506.7 L1136.4,507.3 M1157.2,510.3 L1147.7,510.6 M1157.6,514.0 L1148.1,514.2 M1157.9,517.6 L1148.4,517.9 M1158.2,521.2 L1148.7,521.5 M1158.6,524.9 L1145.1,525.3 M1158.9,528.5 L1149.4,528.8 M1159.3,532.2 L1149.8,532.5 M1159.6,535.8 L1150.1,536.1 M1159.9,539.4 L1150.5,539.8 M1160.3,543.1 L1139.8,543.8 M1160.6,546.7 L1151.1,547.1 M1161.0,550.4 L1151.5,550.7 M1161.3,554.0 L1151.8,554.4 M1161.7,557.7 L1152.2,558.0 M1162.0,561.3 L1148.5,561.8 M1162.3,565.0 L1152.8,565.3 M1162.7,568.6 L1153.2,569.0 M1163.0,572.3 L1153.5,572.6 M1163.4,575.9 L1153.9,576.3 M1163.7,579.6 L1143.2,580.4 M1164.0,583.3 L1154.5,583.6 M1164.4,586.9 L1154.9,587.3 M1164.7,590.6 L1155.2,590.9 M1165.1,594.2 L1155.6,594.6 M1165.4,597.9 L1151.9,598.4 M1165.8,601.6 L1156.3,601.9 M1166.1,605.2 L1156.6,605.6 M1166.4,608.9 L1156.9,609.3 M1166.8,612.5 L1157.3,612.9 M1167.1,616.2 L1146.6,617.1 M1167.5,619.9 L1158.0,620.3 M1167.8,623.5 L1158.3,624.0 M1168.2,627.2 L1158.7,627.6 M1168.5,630.9 L1159.0,631.3 M1168.8,634.6 L1155.4,635.2 M1169.2,638.2 L1159.7,638.7 M1169.5,641.9 L1160.0,642.3 M1169.9,645.6 L1160.4,646.0 M1170.2,649.3 L1160.7,649.7 M1170.6,652.9 L1150.1,653.9 M1170.9,656.6 L1161.4,657.1 M1171.2,660.3 L1161.8,660.7 M1171.6,664.0 L1162.1,664.4 M1171.9,667.6 L1162.4,668.1 M1172.3,671.3 L1158.8,672.0 M1172.6,675.0 L1163.1,675.5 M1173.0,678.7 L1163.5,679.2 M1173.3,682.4 L1163.8,682.9 M1173.7,686.1 L1164.2,686.6 M1174.0,689.8 L1153.5,690.8 M1174.3,693.4 L1164.9,693.9 M1174.7,697.1 L1165.2,697.6 M1175.0,700.8 L1165.6,701.3 M1175.4,704.5 L1165.9,705.0 M1175.7,708.2 L1162.2,708.9 M1176.1,711.9 L1166.6,712.4 M1176.4,715.6 L1166.9,716.1 M1176.8,719.3 L1167.3,719.8 M1177.1,723.0 L1167.6,723.5 M1177.5,726.7 L1157.0,727.9 M1177.8,730.4 L1168.3,730.9 M1178.1,734.1 L1168.7,734.6 M1178.5,737.8 L1169.0,738.4 M1178.8,741.5 L1169.4,742.1 M1179.2,745.2 L1165.7,746.0 M1179.5,748.9 L1170.1,749.5 M1179.9,752.6 L1170.4,753.2 M1180.2,756.3 L1170.7,756.9 M1180.6,760.0 L1171.1,760.6 M1180.9,763.7 L1160.5,765.0 M1181.3,767.5 L1171.8,768.0 M1181.6,771.2 L1172.1,771.8 M1182.0,774.9 L1172.5,775.5 M1182.3,778.6 L1172.8,779.2 M1182.7,782.3 L1169.2,783.2 M1183.0,786.0 L1173.5,786.6 M1183.4,789.7 L1173.9,790.4 M1183.7,793.5 L1174.2,794.1 M1184.0,797.2 L1174.6,797.8 M1184.4,800.9 L1163.9,802.3 M1184.7,804.6 L1175.3,805.3 M1185.1,808.4 L1175.6,809.0 M1185.4,812.1 L1176.0,812.7 M1185.8,815.8 L1176.3,816.5 M1186.1,819.5 L1172.7,820.5 M1186.5,823.3 L1177.0,823.9 M1186.8,827.0 L1177.4,827.6 M1187.2,830.7 L1177.7,831.4 M1187.5,834.4 L1178.1,835.1 M1187.9,838.2 L1167.4,839.6 M1188.2,841.9 L1178.8,842.6 M1188.6,845.6 L1179.1,846.3 M1188.9,849.4 L1179.5,850.1 M1189.3,853.1 L1179.8,853.8 M1189.6,856.9 L1176.2,857.8 M1190.0,860.6 L1180.5,861.3 M1190.3,864.3 L1180.9,865.0 M1190.7,868.1 L1181.2,868.8 M1191.0,871.8 L1181.6,872.5 M1191.4,875.6 L1170.9,877.1 M1191.7,879.3 L1182.3,880.0 M1192.1,883.1 L1182.6,883.8 M1192.4,886.8 L1183.0,887.5 M1192.8,890.5 L1183.3,891.3 M1193.1,894.3 L1179.7,895.4 M1193.5,898.0 L1184.0,898.8 M1193.8,901.8 L1184.4,902.6 M1194.2,905.6 L1184.7,906.3 M1194.5,909.3 L1185.1,910.1 M1194.9,913.1 L1174.5,914.7 M1195.2,916.8 L1185.8,917.6 M1195.6,920.6 L1186.1,921.3 M1195.9,924.3 L1186.5,925.1 M1196.3,928.1 L1186.8,928.9 M1196.6,931.8 L1183.2,933.0 M1197.0,935.6 L1187.5,936.4 M1197.3,939.4 L1187.9,940.2 M1197.7,943.1 L1188.2,943.9 M1198.1,946.9 L1188.6,947.7 M1198.4,950.7 L1178.0,952.4" stroke="#04f804" stroke-width="1.7" fill="none"/>
<path d="M864.6,415.4 L871.7,409.7 M899.2,409.4 L871.7,409.7 L874.6,437.6" stroke="#4a5142" stroke-width="2.2" fill="none" stroke-linecap="butt"/>
<path d="M1361,407.5 L1372.6,402 M1349,402.1 L1372.8,401.8 L1375.8,427.6" stroke="#4a5142" stroke-width="2.2" fill="none" stroke-linecap="butt"/>
<path d="M1427,901 L1429.8,927.9 L1406,930.5" stroke="#4a5142" stroke-width="2.2" fill="none" stroke-linecap="butt"/>
<g id="model">
<path d="M 925.6,674.1 L 920.4,668.9 L 900.6,669.7 L 895.0,677.3 L 904.8,805.7 L 913.0,812.6 L 1031.6,805.3 L 1039.0,797.7 L 1039.6,789.0" stroke="#f0f2a8" stroke-width="1.15" fill="none" stroke-opacity=".95" stroke-linejoin="round"/>
<path d="M 909.8,681.9 L 909.3,674.1 L 918.6,673.0 L 923.7,676.7" stroke="#f0f2a8" stroke-width="1.15" fill="none" stroke-opacity=".95" stroke-linejoin="round"/>
<path d="M 909.8,804.2 L 914.5,808.3 L 919.7,807.6 L 920.4,797.7" stroke="#f0f2a8" stroke-width="1.15" fill="none" stroke-opacity=".95" stroke-linejoin="round"/>
<path d="M 935.8,796.8 L 937.6,805.7 L 952.5,804.6 L 953.8,795.5" stroke="#f0f2a8" stroke-width="1.15" fill="none" stroke-opacity=".95" stroke-linejoin="round"/>
<path d="M 969.2,794.9 L 971.0,803.8 L 985.8,802.7 L 986.8,793.5" stroke="#f0f2a8" stroke-width="1.15" fill="none" stroke-opacity=".95" stroke-linejoin="round"/>
<path d="M 1002.0,792.7 L 1003.8,802.0 L 1018.6,800.7 L 1019.4,790.9" stroke="#f0f2a8" stroke-width="1.15" fill="none" stroke-opacity=".95" stroke-linejoin="round"/>
<path d="M 1034.0,789.8 L 1035.5,796.4 L 1033.5,799.6" stroke="#f0f2a8" stroke-width="1.15" fill="none" stroke-opacity=".95" stroke-linejoin="round"/>
<path d="M 981.2,707.8 L 988.6,701.4 L 993.8,676.3 L 999.7,666.3 L 1018.3,663.7 L 1026.6,670.8" stroke="#f0f2a8" stroke-width="1.15" fill="none" stroke-opacity=".95" stroke-linejoin="round"/>
<path d="M 1008.6,677.8 L 1008.1,669.3 L 1018.3,668.5 L 1024.8,672.3" stroke="#f0f2a8" stroke-width="1.15" fill="none" stroke-opacity=".95" stroke-linejoin="round"/>
<path d="M 983.4,709.3 L 993.2,699.5 L 996.4,712.5" stroke="#f0f2a8" stroke-width="1.15" fill="none" stroke-opacity=".95" stroke-linejoin="round"/>
<path d="M 919.1,796.8 L 955.6,786.6 L 1067.9,778.3 L 1067.6,780.5 L 1035.9,789.8 L 923.4,797.9 Z" fill="#7d4b6c" stroke="#2a1a26" stroke-width="0.9" stroke-linejoin="round"/>
<defs><linearGradient id="ip" x1="0.2" y1="0" x2="0.75" y2="1"><stop offset="0" stop-color="#f79bdb"/><stop offset=".45" stop-color="#f495d6"/><stop offset=".62" stop-color="#e78aca"/><stop offset=".8" stop-color="#ee90d0"/><stop offset="1" stop-color="#f091d1"/></linearGradient></defs>
<path d="M 998.3,713.8 Q 1007.5,694.9 1008.1,677.3 L 1048.3,663.4 L 1050.7,717.1 L 999.7,717.1 Z" fill="url(#ip)" stroke="#2a1a26" stroke-width="0.9" stroke-linejoin="round"/>
<path d="M945.1,668.4 L955.3,668.0 A46.3 48.7 -3 0 0 1048.3,663.4 L1057.2,662.4 L1067.9,778.3 L955.6,786.6 Z" fill="#ffffff" stroke="#2a1a26" stroke-width="0.9" stroke-linejoin="round"/>
<path d="M 909.8,682.8 L 945.1,668.5 L 955.6,786.6 L 919.1,796.8 Z" fill="#f694d6" stroke="#2a1a26" stroke-width="0.9" stroke-linejoin="round"/>
</g>
<g id="axes" shape-rendering="crispEdges">
<path d="M61.6,959.6 L24,960" stroke="#ff1818" stroke-width="2" fill="none"/>
<path d="M22,960 L31.5,955.5 L31.5,964 Z" fill="#ff1818"/>
<path d="M62,959 L64.8,990" stroke="#08f208" stroke-width="2" fill="none"/>
<path d="M61,991.5 L69,991 L65.3,1000.5 Z" fill="#08f208"/>
<path d="M61.8,959.2 L70,955" stroke="#ffff20" stroke-width="1.6" fill="none"/>
</g>
<circle cx="73" cy="953.3" r="3.9" fill="#ffff20"/>
<g fill="none" stroke-width="1">
<path d="M17.5,946 L27.5,958 M27,946 L17,958" stroke="#ff2a2a"/>
<path d="M81.5,935.5 L90,935.5 L82,946.7 L90,946.7" stroke="#f4f42a" stroke-width="1.1"/>
<path d="M68.6,992 L72.6,998 L76.8,992 M72.6,998 L72.6,1004" stroke="#10ee10" stroke-width="1.1"/>
</g>

</svg></div>
<div class="abs" style="left:1918px;top:121px;width:1px;height:899px;background:#efece3"></div>

<div id="sb">
<div class="abs" style="left:0;top:0;width:1919px;height:1.5px;background:#fdfdfd"></div>
<div class="abs" style="left:0;top:0;width:93px;height:4px;background:#fcfcfc"></div>
<div class="abs" style="left:0;top:20px;width:1919px;height:1px;background:#fff"></div>
<div class="abs" style="left:0;top:4px;width:93px;height:16px;background:#f0f0f0;border-top:1px solid #e6e6e6;border-right:1px solid #808080;box-sizing:border-box"></div>
<span class="t" style="left:3.20px;top:5.7px;font-size:13px;color:#a0a0a0;font-weight:normal;transform:scaleX(0.9993);text-shadow:.4px 0 0 #a8a8a8;">Imprimante 3D</span>
<span class="t" style="left:96.74px;top:5.7px;font-size:13px;color:#000;font-weight:normal;transform:scaleX(0.8610);">Prêt</span>
<div class="abs" style="left:1150px;top:4px;width:156px;height:16px;box-sizing:border-box;border-left:1px solid #a0a0a0;border-top:1px solid #a0a0a0;border-right:1px solid #fff;"></div>
<div class="abs" style="left:1308px;top:4px;width:146px;height:16px;box-sizing:border-box;border-left:1px solid #a0a0a0;border-top:1px solid #a0a0a0;border-right:1px solid #fff;"></div>
<div class="abs" style="left:1456px;top:4px;width:156px;height:16px;box-sizing:border-box;border-left:1px solid #a0a0a0;border-top:1px solid #a0a0a0;border-right:1px solid #fff;"></div>
<div class="abs" style="left:1614px;top:4px;width:316px;height:16px;box-sizing:border-box;border-left:1px solid #a0a0a0;border-top:1px solid #a0a0a0;border-right:1px solid #fff;"></div>
<div class="abs" style="left:1152px;top:6px;width:9px;height:13px;background:#3399ff"></div>
<span class="t" style="left:1326.10px;top:5.7px;font-size:13px;color:#000;font-weight:normal;transform:scaleX(0.9010);">UP Mini(M) (207839)</span>
<span class="t" style="left:1466.11px;top:5.7px;font-size:13px;color:#000;font-weight:normal;transform:scaleX(0.8892);">Nozzle: 100%  en Chauffe</span>
<span class="t" style="left:1662.62px;top:5.7px;font-size:13px;color:#000;font-weight:normal;transform:scaleX(0.8812);">Printing Layer:4 / 0:23 Heures Restantes</span>
</div>
<div id="task" style="background:linear-gradient(90deg,#1b5c96 0px,#1f649c 50px,#2f80be 75px,#3388c6 110px,#3b94d0 200px,#429ed6 300px,#4aa6da 420px,#4ba8dc 520px,#48a5da 650px,#419cd3 760px,#3c98d0 850px,#3a94ce 960px,#348ecb 1050px,#3088c8 1100px,#2a80c4 1160px,#2c7cc0 1220px,#2c78bc 1300px,#2470b4 1350px,#2068ae 1400px,#1f62a6 1500px,#1e5c9e 1600px,#1f5591 1650px,#1d4d85 1700px,#1c4678 1780px,#1b4070 1850px,#1a3e6c 1919px)">
<div class="abs" style="left:1333px;top:-35.5px;width:17px;height:110px;transform:rotate(-54.2deg);transform-origin:50% 50%;background:linear-gradient(90deg,rgba(255,255,255,0),rgba(190,222,250,.85) 42%,rgba(190,222,250,.85) 58%,rgba(255,255,255,0));filter:blur(1.2px)"></div>
<div class="abs" style="left:28px;top:-52px;width:18px;height:150px;transform:rotate(61deg);background:linear-gradient(90deg,rgba(255,255,255,0),rgba(150,195,228,.42) 50%,rgba(255,255,255,0));filter:blur(2.5px)"></div>
<div class="abs" style="left:640px;top:-60px;width:50px;height:170px;transform:rotate(72deg);background:linear-gradient(90deg,rgba(255,255,255,0),rgba(200,230,248,.2) 50%,rgba(255,255,255,0));filter:blur(4px)"></div>
<div class="abs" style="left:0;top:0;width:1919px;height:39px;background:linear-gradient(180deg,rgba(10,30,60,.75) 0px,rgba(10,30,60,.75) 1px,rgba(200,230,250,.55) 1px,rgba(200,230,250,.55) 2px,rgba(255,255,255,.10) 2px,rgba(255,255,255,0) 14px,rgba(0,20,60,.08) 39px)"></div>
<!-- taskbar buttons (running apps) -->
<div class="abs" style="left:307px;top:0px;width:60px;height:43px;border-radius:3px;box-sizing:border-box;border:1px solid rgba(12,34,60,.85);background:linear-gradient(155deg,rgba(225,242,252,.82) 0%,rgba(175,218,242,.66) 30%,rgba(120,190,228,.5) 55%,rgba(110,185,226,.5) 75%,rgba(135,200,235,.55) 100%);box-shadow:inset 0 0 0 1px rgba(235,248,255,.7)"></div>
<div class="abs" style="left:369px;top:0px;width:60px;height:43px;border-radius:3px;box-sizing:border-box;border:1px solid rgba(12,34,60,.85);background:linear-gradient(155deg,rgba(250,253,255,.95) 0%,rgba(225,240,250,.86) 30%,rgba(185,220,244,.76) 55%,rgba(170,212,240,.72) 75%,rgba(195,228,248,.78) 100%);box-shadow:inset 0 0 0 1px rgba(255,255,255,.85)"></div>
<svg class="abs" style="left:0;top:0" width="1919" height="39" viewBox="0 1040 1919 39">
<defs>
 <radialGradient id="orb" cx=".5" cy=".97" r=".9"><stop offset="0" stop-color="#20dcfa"/><stop offset=".25" stop-color="#1492cc"/><stop offset=".55" stop-color="#0e4e8e"/><stop offset="1" stop-color="#2a5e94"/></radialGradient>
 <linearGradient id="orbh" x1="0" x2="0" y1="0" y2="1"><stop offset="0" stop-color="#d2dce6" stop-opacity=".9"/><stop offset="1" stop-color="#8099b2" stop-opacity=".55"/></linearGradient>
 <radialGradient id="ffx" cx=".78" cy=".18" r="1.05"><stop offset="0" stop-color="#ffe43c"/><stop offset=".28" stop-color="#ffae28"/><stop offset=".52" stop-color="#ff6a32"/><stop offset=".78" stop-color="#ff3a48"/><stop offset="1" stop-color="#f0107c"/></radialGradient><linearGradient id="ffy" x1=".3" y1="0" x2=".8" y2="1"><stop offset="0" stop-color="#fff650"/><stop offset=".55" stop-color="#ffd83c"/><stop offset="1" stop-color="#ffa838"/></linearGradient>
 <radialGradient id="ffp" cx=".55" cy=".4" r=".65"><stop offset="0" stop-color="#8f5cff"/><stop offset=".6" stop-color="#7448e8"/><stop offset="1" stop-color="#5a2cc0"/></radialGradient>
 <linearGradient id="upb" x1="0" x2="0" y1="0" y2="1"><stop offset="0" stop-color="#52b2d8"/><stop offset=".3" stop-color="#2a8cc6"/><stop offset=".5" stop-color="#1470b2"/><stop offset=".56" stop-color="#0f60a4"/><stop offset="1" stop-color="#0a4a8a"/></linearGradient>
 <radialGradient id="ysp" cx=".3" cy=".3" r=".85"><stop offset="0" stop-color="#fff644"/><stop offset=".45" stop-color="#f2d024"/><stop offset=".8" stop-color="#cca416"/><stop offset="1" stop-color="#9c7c10"/></radialGradient>
</defs>
<!-- start orb -->
<circle cx="27.1" cy="1060" r="18.3" fill="#16406e" opacity=".7"/>
<circle cx="27.1" cy="1060" r="17.3" fill="url(#orb)" stroke="#8fc0e4" stroke-width="1" stroke-opacity=".8"/>
<path d="M10.6,1057.5 A16.6,16.6 0 0 1 43.6,1057.5 C36,1063 18,1063 10.6,1057.5 Z" fill="url(#orbh)"/>
<g transform="translate(27.1 1060) scale(1.12) translate(-27.1 -1060)">
 <path d="M19.4,1050.8 C22,1049.2 25,1049.2 27.6,1050.6 L25.6,1058.6 C23,1057.4 20.4,1057.6 17.6,1059 Z" fill="#ee5a1e"/>
 <path d="M29,1051.2 C31.8,1052.6 35,1052.4 38.2,1050.8 L36,1058.8 C33,1060.4 30,1060.4 27,1059 Z" fill="#8ec83e"/>
 <path d="M17.2,1060.4 C20,1059 22.8,1059 25.2,1060.2 L23.2,1068.4 C20.6,1067.2 18,1067.2 15.2,1068.6 Z" fill="#3a90e4"/>
 <path d="M26.6,1060.8 C29.6,1062.2 32.6,1062 35.6,1060.4 L33.6,1068.6 C30.6,1070.2 27.6,1070.2 24.6,1068.8 Z" fill="#fcca2e"/>
</g>
<!-- explorer folder -->
<g>
 <path d="M74,1049 L75.4,1047.4 L88.4,1047.4 L89.6,1049.4 L96.4,1049.4 L97.6,1051.4 L103.4,1051.4 L104.6,1053 L104.6,1073.8 L74,1073.8 Z" fill="#f1d888" stroke="#d9b85e" stroke-width=".6"/>
 <rect x="76" y="1048.6" width="3.2" height="1.9" fill="#16c416"/><rect x="79.6" y="1048.6" width="7.4" height="1.9" fill="#fff"/>
 <rect x="84.4" y="1050.8" width="3.2" height="1.9" fill="#e8341e"/><rect x="88" y="1050.8" width="7.6" height="1.9" fill="#fff"/>
 <rect x="92.4" y="1053" width="3.2" height="1.9" fill="#1e8cf4"/><rect x="96" y="1053" width="6.8" height="1.9" fill="#fff"/>
 <path d="M74,1055.4 L104.6,1055.4 L104.6,1073.8 L74,1073.8 Z" fill="#fbeeb2"/>
 <path d="M74,1055.4 L104.6,1055.4" stroke="#fff8d8" stroke-width=".8"/>
 <path d="M74,1073.8 L74,1049 M104.6,1053 L104.6,1073.8 L74,1073.8" fill="none" stroke="#dcbc62" stroke-width=".7"/>
 <path d="M77.4,1075.4 L77.4,1065.8 C77.4,1064 78.6,1063 80.2,1063 L98,1063 C99.8,1063 101,1064 101,1065.8 L101,1075.4 L96.6,1075.4 L96.6,1069.6 L82,1069.6 L82,1075.4 Z" fill="#a8daf4" stroke="#62b0e0" stroke-width=".7" opacity=".95"/>
 <path d="M79,1065.6 L99.4,1065.6" stroke="#eafaff" stroke-width="1.4"/>
 <path d="M79.6,1060 L80.4,1064.6 L85,1065.6 L80.4,1066.4 L79.6,1071 L78.8,1066.4 L75.4,1065.6 L78.8,1064.6 Z" fill="#fff" opacity=".9"/>
</g>
<!-- firefox -->
<g>
 <path d="M136.4,1057.3 L141.0,1048.9 L142.5,1052.1 L145.4,1050.1 L147.0,1053.4 C148.2,1052.8 149.3,1052.6 150.1,1052.5 C150.8,1048.0 153.3,1045.1 155.3,1043.8 C156.6,1046.9 159.8,1049.0 162.7,1050.8 C164.9,1053.7 166.1,1057.0 165.8,1060.8 C165.6,1066.0 162.7,1071.1 156.9,1074.0 C151.9,1076.1 145.0,1075.8 140.3,1071.4 C136.7,1067.8 135.2,1063.1 135.8,1060.2 C135.9,1059.2 136.1,1058.3 136.4,1057.3 Z" fill="url(#ffx)"/>
 <path d="M150.1,1052.5 C150.8,1048.0 153.3,1045.1 155.3,1043.8 C156.6,1046.9 159.8,1049.0 162.7,1050.8 C164.9,1053.7 166.1,1057.0 165.8,1060.8 C164.9,1065.3 162.7,1067.5 160.5,1065.3 C159.8,1058.8 155.5,1054.5 150.1,1052.5 Z" fill="url(#ffy)"/>
 <circle cx="151.3" cy="1060.3" r="6.5" fill="url(#ffp)"/>
 <path d="M139.9,1057.0 C142.5,1055.2 146.8,1055.9 151.1,1057.5 C148.2,1058.8 145.7,1059.9 145.0,1062.0 C144.6,1064.6 146.8,1066.7 149.7,1067.5 C146.1,1067.5 143.2,1064.9 143.5,1061.7 C143.9,1060.2 145.3,1059.5 146.1,1059.0 C143.9,1058.8 141.4,1058.4 139.9,1057.0 Z" fill="#ff9a1c"/>
 <path d="M140.1,1057.2 C143.2,1055.9 147.5,1056.4 150.8,1057.6 C147.5,1058.1 143.9,1058.3 141.7,1058.1 C140.8,1057.9 140.3,1057.5 140.1,1057.2 Z" fill="#ffb428" opacity=".9"/>
</g>
<!-- bar chart icon -->
<g>
 <path d="M197.6,1056 L212,1047.6 L226.8,1056 L226.8,1068 L212,1076.4 L197.6,1068 Z" fill="#bdbdbd" stroke="#141414" stroke-width="1.1"/>
 <path d="M197.6,1056 L212,1047.6 L212,1060 L197.6,1068 Z" fill="#c9c9c9"/>
 <path d="M212,1047.6 L226.8,1056 L226.8,1068 L212,1060 Z" fill="#d6d6d6"/>
 <path d="M197.6,1068 L212,1060 L226.8,1068 L212,1076.4 Z" fill="#9c9c9c"/>
 <path d="M212,1047.6 L212,1060 L197.6,1068 M212,1060 L226.8,1068" fill="none" stroke="#2a2a2a" stroke-width=".7"/>
 <rect x="211.4" y="1045.4" width="7.6" height="22" rx="1" fill="#1220e6" stroke="#08085a" stroke-width=".8"/><ellipse cx="215.2" cy="1045.6" rx="3.8" ry="1.6" fill="#2a3cff" stroke="#08085a" stroke-width=".6"/>
 <rect x="207.2" y="1053.6" width="7.2" height="17" rx="1" fill="#16dc16" stroke="#085008" stroke-width=".8"/><ellipse cx="210.8" cy="1054" rx="3.6" ry="1.5" fill="#48ff48" stroke="#085008" stroke-width=".6"/>
 <rect x="203" y="1060.4" width="7.2" height="12.6" rx="1" fill="#ee1212" stroke="#580808" stroke-width=".8"/><ellipse cx="206.6" cy="1060.8" rx="3.6" ry="1.5" fill="#ff4848" stroke="#580808" stroke-width=".6"/>
 <path d="M197.6,1068 L212,1076.4 L226.8,1068" fill="none" stroke="#141414" stroke-width="1.1"/>
</g>
<!-- REG icon -->
<g>
 <rect x="259.2" y="1044" width="32" height="32" fill="#fff"/>
 <path d="M262,1045 L262,1074 L291,1074" fill="none" stroke="#111" stroke-width="1.4" stroke-dasharray="1.6 1.4"/>
 <path d="M263,1072 L269.6,1045" stroke="#0a8a1a" stroke-width="1.1" stroke-dasharray="3 1"/>
 <path d="M263.6,1071 C265,1062 267,1054 274,1052.6 C280,1051.4 286,1052.6 290,1052.4" fill="none" stroke="#f01414" stroke-width="1.1"/>
 <g stroke="#1414c8" stroke-width="1"><path d="M269,1051.6 h3.4 M270.7,1050 v3.4 M274,1049.6 h3.4 M275.7,1048 v3.4 M279,1053.6 h3.4 M280.7,1052 v3.4 M282,1048.6 h3.4 M283.7,1047 v3.4 M287,1050 h3.4 M288.7,1048.4 v3.4 M268,1058 h3.4 M269.7,1056.4 v3.4 M265,1063 h3 M266.5,1061.6 v3"/></g>
</g>
<!-- yellow shape -->
<g>
 <ellipse cx="348.6" cy="1054.6" rx="3.4" ry="5.2" fill="#a49c86" opacity=".9" transform="rotate(-20 348.6 1054.6)"/>
 <ellipse cx="325.6" cy="1065.4" rx="4.2" ry="6.2" fill="#8e886c" opacity=".9" transform="rotate(-28 325.6 1065.4)"/>
 <circle cx="336.6" cy="1059.6" r="11.6" fill="url(#ysp)"/>
 <ellipse cx="336.8" cy="1050.2" rx="6" ry="2.9" fill="#5e6c14"/>
 <ellipse cx="338.6" cy="1050.6" rx="3.6" ry="1.7" fill="#90a034"/>
 <ellipse cx="334.6" cy="1052.4" rx="1.2" ry=".8" fill="#cfe8f4"/>
 <ellipse cx="344.4" cy="1064.4" rx="3.5" ry="6" fill="#d2e264" transform="rotate(32 344.4 1064.4)"/>
 <ellipse cx="345.4" cy="1065.6" rx="2" ry="3.6" fill="#e2f07c" transform="rotate(32 345.4 1065.4)"/>
 <circle cx="340.9" cy="1067" r="1" fill="#9fd4f0"/><circle cx="344.8" cy="1059.8" r=".9" fill="#6a80a8"/>
 <ellipse cx="329.4" cy="1064" rx="3" ry="6" fill="#a48c34" transform="rotate(-30 329.4 1064)"/>
 <ellipse cx="330.4" cy="1065.6" rx="1.6" ry="3.4" fill="#8e9838" transform="rotate(-30 330.4 1065.6)"/>
</g>
<!-- UP! icon -->
<g>
 <rect x="383.2" y="1044" width="31.6" height="32" rx="3.2" fill="url(#upb)" stroke="#0a2c74" stroke-width="1"/>
 <path d="M384,1047 a3,3 0 0 1 3,-2.4 h24 a3,3 0 0 1 3,2.4 v12 C404,1056 394,1056 384,1059 Z" fill="#7cc8ec" opacity=".12"/>
</g>
<!-- tray -->
<path d="M1709.4,1063.3 L1717.4,1063.3 L1713.4,1058.7 Z" fill="#fff"/>
<g>
 <rect x="1733.6" y="1052.6" width="6.4" height="6" fill="#d0d0d0" stroke="#7a7a7a" stroke-width=".6"/>
 <path d="M1732,1058.4 h9.6 v5.6 l-2.6,2.6 h-4.4 l-2.6,-2.6 Z" fill="#8a8a8a" stroke="#5a5a5a" stroke-width=".5"/>
 <rect x="1735.6" y="1066" width="2.4" height="3" fill="#7a7a7a"/>
 <circle cx="1741" cy="1064.2" r="4.8" fill="#22a822" stroke="#0c6a0c" stroke-width=".6"/>
 <path d="M1738.6,1064.2 L1740.4,1066.4 L1743.6,1061.8" fill="none" stroke="#fff" stroke-width="1.5"/>
</g>
<g>
 <path d="M1756,1058.4 h3 l4.6,-4.6 v14.4 l-4.6,-4.6 h-3 Z" fill="#f2f2f2" stroke="#8a8a8a" stroke-width=".5"/>
 <path d="M1766.4,1056.6 C1768.4,1059 1768.4,1063 1766.4,1065.4" fill="none" stroke="#e8e8e8" stroke-width="1.1"/>
</g>
<g>
 <path d="M1779.4,1053.6 L1779.4,1069" stroke="#f4f4f4" stroke-width="1.6"/>
 <path d="M1780.4,1054.2 C1783,1052.6 1785,1055.4 1788,1054 L1788,1061 C1785,1062.4 1783,1059.6 1780.4,1061.2 Z" fill="#fff"/>
 <path d="M1788,1055.6 C1790,1055 1791.6,1056 1793.4,1055.4 L1793.4,1061 C1791.6,1061.6 1790,1060.6 1788,1061.2 Z" fill="#d4d8e0"/>
 <circle cx="1789" cy="1065" r="4.6" fill="#e0242a" stroke="#fff" stroke-width=".6"/>
 <path d="M1787,1063 L1791,1067 M1791,1063 L1787,1067" stroke="#fff" stroke-width="1.4"/>
</g>
<g>
 <rect x="1807.6" y="1056" width="10" height="8.6" fill="#1a3a66" stroke="#f4f4f4" stroke-width="1.3"/>
 <path d="M1812.6,1064.6 v2.6 M1808.6,1067.8 h8" stroke="#f4f4f4" stroke-width="1.3"/>
 <path d="M1803.6,1054 v4.6 h4.6 v-4.6 M1805.9,1058.6 v4 h2" fill="none" stroke="#f4f4f4" stroke-width="1.1"/>
</g>
</svg>

<span class="t" style="left:387.40px;top:13.9px;font-size:16px;color:#fff;font-weight:bold;transform:scaleX(0.9304);">UP!</span>
<span class="t" style="left:267.20px;top:19.9px;font-size:9px;color:#1010e8;font-weight:bold;transform:scaleX(1.1486);">REG</span>
<span class="t" style="left:1678.85px;top:10.8px;font-size:12.5px;color:#fff;font-weight:normal;transform:scaleX(0.8506);">FR</span>
<span class="t" style="left:1851.80px;top:6.1px;font-size:12.5px;color:#fff;font-weight:normal;transform:scaleX(0.8459);">15:18</span>
<span class="t" style="left:1836.20px;top:22.6px;font-size:12.5px;color:#fff;font-weight:normal;transform:scaleX(0.9072);">12/02/2020</span>
<div class="abs" style="left:1905px;top:1px;width:14px;height:38px;background:linear-gradient(160deg,rgba(150,175,205,.5),rgba(70,100,140,.35) 35%,rgba(30,60,105,.25) 50%,rgba(40,85,140,.45));box-shadow:inset 1px 0 0 rgba(16,36,64,.85), inset 2px 0 0 rgba(150,180,210,.55), inset 0 2px 0 rgba(150,180,210,.4)"></div>
</div>
</div>
</body></html>
